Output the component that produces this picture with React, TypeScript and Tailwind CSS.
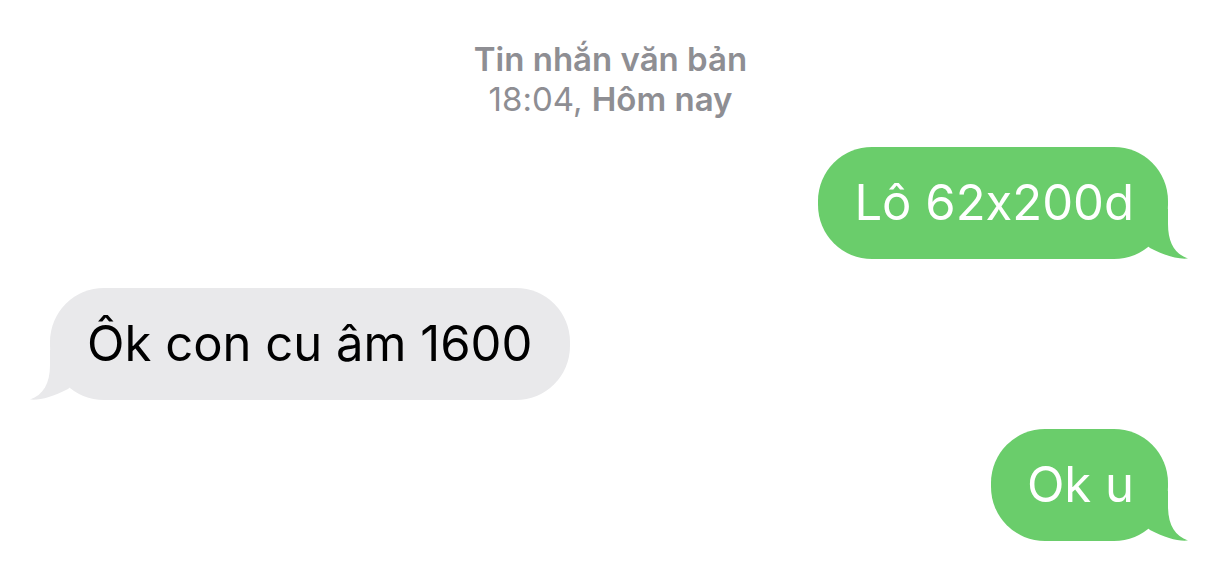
import React from "react";

type Side = "me" | "them";

const Tail = ({ side }: { side: Side }) => {
  const fill = side === "me" ? "#6acd6b" : "#e9e9eb";
  return (
    <svg
      width="50"
      height="50"
      viewBox="0 0 50 50"
      className={
        side === "me"
          ? "absolute bottom-0 right-[-22px]"
          : "absolute bottom-0 left-[-22px] -scale-x-100"
      }
    >
      <path
        d="M0 0 H28 V15 C28 34 35 45 48 49.5 C38 50.5 26 47 10 39 L0 30 Z"
        fill={fill}
      />
    </svg>
  );
};

const Bubble = ({ side, text }: { side: Side; text: string }) => (
  <div className={side === "me" ? "flex justify-end pr-[63px]" : "flex justify-start pl-[50px]"}>
    <div
      className={
        side === "me"
          ? "relative rounded-[54px] bg-[#6acd6b] py-[26px] pl-[36px] pr-[34px] text-white"
          : "relative rounded-[54px] bg-[#e9e9eb] py-[26px] pl-[37px] pr-[38px] text-black"
      }
    >
      <Tail side={side} />
      <span className="relative block text-[49px] leading-[60px] whitespace-nowrap">{text}</span>
    </div>
  </div>
);

export default function App() {
  return (
    <div
      className="h-[573px] w-[1231px] overflow-hidden bg-white"
      style={{ fontFamily: "Inter, 'Liberation Sans', sans-serif", fontFeatureSettings: '"calt" 0' }}
    >
      <div className="flex flex-col items-center pt-[39px] pr-[10px] text-[33px] leading-[40px] text-[#8e8e93]">
        <div className="font-semibold">Tin nhắn văn bản</div>
        <div>
          18:04, <span className="font-semibold">Hôm nay</span>
        </div>
      </div>
      <div className="mt-[28px] flex flex-col gap-[29px]">
        <Bubble side="me" text="Lô 62x200d" />
        <Bubble side="them" text="Ôk con cu âm 1600" />
        <Bubble side="me" text="Ok u" />
      </div>
    </div>
  );
}
